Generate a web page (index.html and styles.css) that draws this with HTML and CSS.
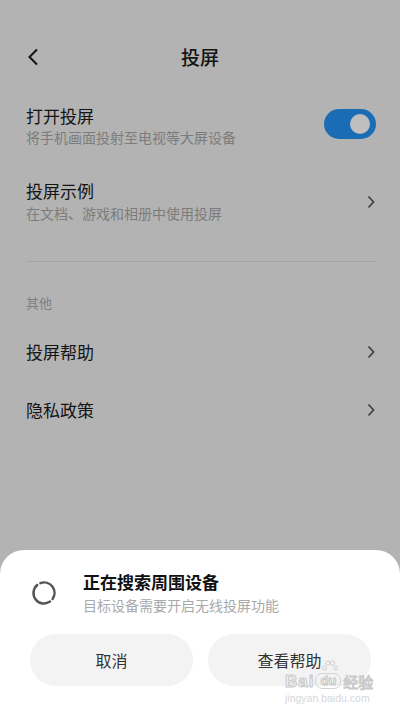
FILE: index.html
```html
<!DOCTYPE html>
<html lang="zh-CN">
<head>
    <meta charset="UTF-8">
    <meta name="viewport" content="width=device-width, initial-scale=1.0">
    <title>投屏</title>
    <link rel="stylesheet" href="styles.css">
</head>
<body>
    <div class="screen">
        <header class="topbar">
            <div class="back">
                <svg width="12" height="18" viewBox="0 0 12 18"><path d="M10 1.5 L2.5 9 L10 16.5" fill="none" stroke="#111" stroke-width="2"/></svg>
            </div>
            <h1>投屏</h1>
            <div></div>
        </header>

        <section class="list">
            <div class="row first">
                <div class="text">
                    <div class="title">打开投屏</div>
                    <div class="sub">将手机画面投射至电视等大屏设备</div>
                </div>
                <div class="switch"><span class="knob"></span></div>
            </div>
            <div class="row">
                <div class="text">
                    <div class="title">投屏示例</div>
                    <div class="sub">在文档、游戏和相册中使用投屏</div>
                </div>
                <svg class="chevron" width="8" height="14" viewBox="0 0 8 14"><path d="M1.5 1.5 L6.5 7 L1.5 12.5" fill="none" stroke="#444" stroke-width="1.8"/></svg>
            </div>
            <div class="divider"></div>
            <div class="group-label">其他</div>
            <div class="row simple">
                <div class="title">投屏帮助</div>
                <svg class="chevron" width="8" height="14" viewBox="0 0 8 14"><path d="M1.5 1.5 L6.5 7 L1.5 12.5" fill="none" stroke="#444" stroke-width="1.8"/></svg>
            </div>
            <div class="row simple">
                <div class="title">隐私政策</div>
                <svg class="chevron" width="8" height="14" viewBox="0 0 8 14"><path d="M1.5 1.5 L6.5 7 L1.5 12.5" fill="none" stroke="#444" stroke-width="1.8"/></svg>
            </div>
        </section>

        <div class="sheet">
            <div class="info">
                <svg class="spinner" width="26" height="26" viewBox="0 0 26 26">
                    <path d="M9.41 3.13 A10.5 10.5 0 0 1 21.6 19.03" fill="none" stroke="#555" stroke-width="2.5" stroke-linecap="round"/>
                    <path d="M19.03 21.6 A10.5 10.5 0 0 1 6.25 4.96" fill="none" stroke="#555" stroke-width="2.5" stroke-linecap="round"/>
                </svg>
                <div class="text">
                    <div class="sheet-title">正在搜索周围设备</div>
                    <div class="sheet-sub">目标设备需要开启无线投屏功能</div>
                </div>
            </div>
            <div class="actions">
                <button class="btn">取消</button>
                <button class="btn">查看帮助</button>
            </div>

            <div class="watermark">
                <div class="wm-line">
                    <span class="wm-bai">Bai</span>
                    <span class="wm-du">
                        <svg class="paw" width="16" height="12" viewBox="0 0 16 12">
                            <circle cx="2.5" cy="8" r="2" fill="none" stroke="#cfcfcf"/>
                            <circle cx="6" cy="3" r="2.2" fill="none" stroke="#cfcfcf"/>
                            <circle cx="10.5" cy="3" r="2.2" fill="none" stroke="#cfcfcf"/>
                            <circle cx="14" cy="8" r="2" fill="none" stroke="#cfcfcf"/>
                        </svg>du</span>
                    <span class="wm-jy">经验</span>
                </div>
                <div class="wm-url">jingyan.baidu.com</div>
            </div>
        </div>
    </div>
</body>
</html>
```

FILE: styles.css
```css
body {
    margin: 0;
    padding: 0;
    background-color: #b3b3b3;
    font-family: "Noto Sans CJK SC", "Noto Sans", sans-serif;
    color: #141414;
}

.screen {
    position: relative;
    width: 400px;
    height: 711px;
    overflow: hidden;
}

.topbar {
    display: grid;
    grid-template-columns: 1fr auto 1fr;
    align-items: center;
    height: 56px;
    margin-top: 29px;
}

.topbar .back {
    display: flex;
    padding-left: 27px;
}

.topbar h1 {
    margin: 0;
    font-size: 19px;
    font-weight: 500;
    line-height: 24px;
}

.list {
    padding: 0 24px 0 26px;
}

.row {
    display: flex;
    align-items: center;
    justify-content: space-between;
    padding: 17px 0 16px;
}

.row.first {
    padding-top: 20px;
}

.row.simple {
    padding: 18px 0;
}

.title {
    font-size: 17px;
    line-height: 22px;
}

.sub {
    font-size: 14px;
    line-height: 20px;
    color: #7c7c7c;
    margin-top: 1px;
}

.row.first .sub {
    margin-top: 0;
}

.chevron {
    margin-right: 1px;
}

.switch {
    width: 52px;
    height: 30px;
    border-radius: 15px;
    background-color: #1a6db5;
    display: flex;
    align-items: center;
    justify-content: flex-end;
    padding-right: 6px;
    box-sizing: border-box;
    margin-bottom: 4px;
}

.knob {
    width: 20px;
    height: 20px;
    border-radius: 50%;
    background-color: #bfbfbf;
}

.divider {
    height: 1px;
    background-color: #a4a4a4;
    margin-top: 22px;
}

.group-label {
    font-size: 13px;
    line-height: 18px;
    color: #7d7f84;
    margin-top: 32px;
    margin-bottom: 11px;
}

.sheet {
    position: absolute;
    left: 0;
    right: 0;
    top: 550px;
    bottom: 0;
    background-color: #fff;
    border-radius: 24px 24px 0 0;
    padding: 20px 29px 0 30px;
}

.info {
    display: flex;
    align-items: center;
}

.spinner {
    margin-left: 1px;
    margin-right: 26px;
}

.sheet-title {
    font-size: 17px;
    font-weight: 700;
    line-height: 24px;
    color: #111;
}

.sheet-sub {
    font-size: 14px;
    line-height: 20px;
    color: #a9a9a9;
    margin-top: 1px;
}

.actions {
    display: flex;
    gap: 15px;
    margin-top: 19px;
}

.btn {
    flex: 1;
    height: 52px;
    border: none;
    border-radius: 26px;
    background-color: #f3f3f3;
    font-family: "Noto Sans CJK SC", sans-serif;
    font-size: 16px;
    line-height: 20px;
    color: #333;
    padding: 0;
}

.watermark {
    position: absolute;
    left: 285px;
    top: 123px;
    color: #d4d4d4;
}

.wm-line {
    display: flex;
    align-items: flex-end;
    line-height: 14px;
}

.wm-bai {
    font-family: "Liberation Sans", sans-serif;
    font-weight: 700;
    font-size: 17px;
    letter-spacing: 1px;
    color: #f4f4f4;
    -webkit-text-stroke: 1px #c9c9c9;
}

.wm-du {
    position: relative;
    font-family: "Liberation Sans", sans-serif;
    font-weight: 700;
    font-size: 13px;
    color: #f4f4f4;
    -webkit-text-stroke: 1px #c9c9c9;
    margin-left: 1px;
    padding: 0 4px;
    border: 1px solid #d2d2d2;
    border-radius: 7px;
}

.paw {
    position: absolute;
    left: 6px;
    top: -14px;
}

.wm-jy {
    font-size: 15px;
    color: #f4f4f4;
    -webkit-text-stroke: 1px #c9c9c9;
    margin-left: 2px;
}

.wm-url {
    font-family: "Liberation Sans", sans-serif;
    font-size: 10.5px;
    line-height: 11px;
    color: #d8d8d8;
    margin-top: 4px;
}
```
